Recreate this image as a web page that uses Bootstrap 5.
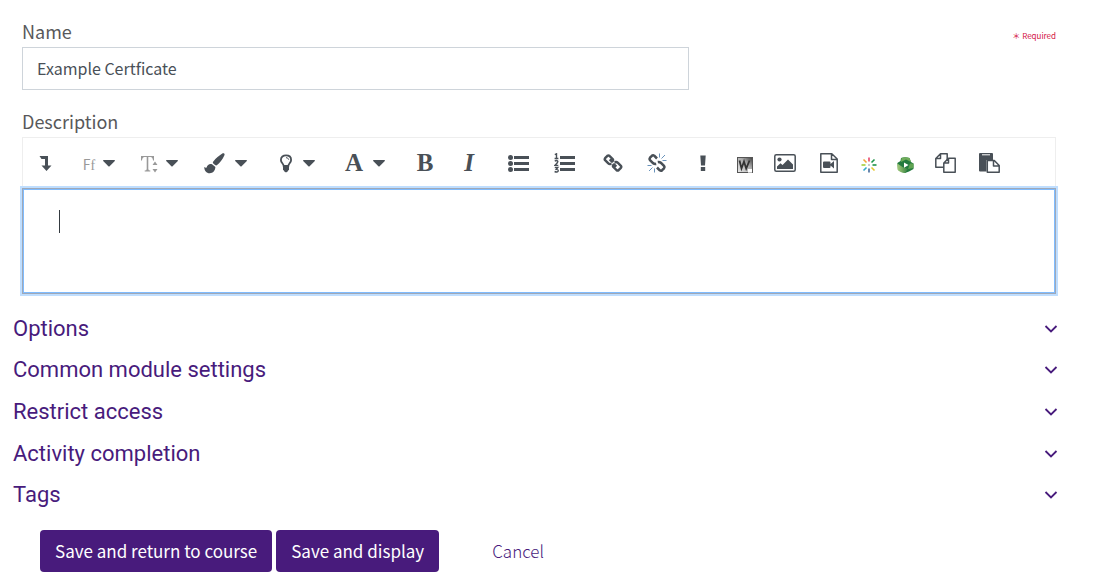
<!DOCTYPE html>
<html lang="en">
<head>
<meta charset="utf-8">
<meta name="viewport" content="width=device-width, initial-scale=1">
<title>Edit certificate</title>
<link href="https://cdn.jsdelivr.net/npm/bootstrap@5.3.0/dist/css/bootstrap.min.css" rel="stylesheet">
<style>
  :root { --brand: #481b7c; --ink: #495057; }
  body { font-family: "Noto Sans CJK SC", "Noto Sans", sans-serif; font-size: 17px; line-height: 24px; color: #555; background: #fff; }
  .fields { padding: 20px 40px 0 22px; }
  .field-label { font-size: 18px; line-height: 22px; display: block; margin: 0; color: #58585a; }
  .required-note { font-size: 8px; line-height: 12px; color: #d3123f; padding-top: 10px; }
  .name-box { font-size: 16px; line-height: 24px; height: 43px; max-width: 667px; margin-top: 5px; padding: 0 14px 2px; border: 1px solid #ced4da; border-radius: 0; color: var(--ink); }
  .desc-group { margin-top: 20px; }
  .toolbar { margin-top: 5px; min-height: 51px; gap: 4px; border: 1px solid #eee; border-bottom: 0; }
  .tool { width: 44px; height: 50px; padding: 0; border: 0; background: none; color: var(--ink); display: flex; align-items: center; justify-content: center; }
  .tool svg { display: block; flex: none; }
  .tool-list { width: 46px; }
  .tool-mark { width: 40px; }
  .tool-image { width: 36px; padding-top: 4px; }
  .tool-menu { width: 68px; gap: 10px; }
  .tool-menu-narrow { width: 56px; gap: 8px; }
  .glyph { font: bold 25px/30px "Liberation Serif", serif; }
  .glyph-font { font: 14px/20px "Noto Sans CJK SC", sans-serif; color: #999; padding-top: 4px; }
  .glyph-font span { font-family: "Liberation Serif", serif; }
  .editor { display: block; width: 100%; height: 106px; padding: 20px 35px; resize: none; border: 1px solid #a0a9b8; border-radius: 0; outline: 0; box-shadow: inset 0 0 0 1px #7fbcff, 0 0 0 2px #bfdeff; font-size: 17px; line-height: 24px; color: var(--ink); }
  .caret-line { position: absolute; left: 37px; top: 22px; width: 1px; height: 23px; background: #343a40; }
  .sections { padding: 0 38px 0 13px; margin-top: 14px; min-height: 208px; display: grid; grid-auto-rows: 1fr; }
  .section-link { font-family: Roboto, sans-serif; font-size: 22px; line-height: 28px; color: var(--brand); text-decoration: none; }
  .actions { padding: 14px 40px 12px; gap: 4px; }
  .save { height: 42px; padding: 0 15px; border: 0; border-radius: 4px; background: var(--brand); color: #fff; font-size: 17px; line-height: 24px; }
  .cancel { margin-left: 49px; color: var(--brand); font-weight: 300; font-size: 17px; text-decoration: none; }
</style>
</head>
<body>
<svg class="d-none" aria-hidden="true">
  <symbol id="down" viewBox="0 0 12 7"><path fill="currentColor" d="M.6 0h10.800q.8.1.4.9L6.600 6.300q-.6.5-1.200 0L.2.9Q-.2.1.6 0z"/></symbol>
  <symbol id="chev" viewBox="0 0 14 10"><path fill="none" stroke="currentColor" stroke-width="1.800" d="M1.500 2 7 7.500 12.500 2"/></symbol>
</svg>
<form onsubmit="return false">
  <div class="fields">
    <div class="d-flex justify-content-between">
      <label class="field-label" for="name">Name</label>
      <div class="required-note">＊ Required</div>
    </div>
    <input id="name" class="form-control name-box" type="text" value="Example Certficate">

    <div class="desc-group">
      <label class="field-label" for="desc">Description</label>
      <div class="toolbar d-flex flex-wrap" role="toolbar" aria-label="Editor">
        <button type="button" class="tool" aria-label="Show more buttons"><svg width="13" height="17" viewBox="0 0 13 17"><path fill="currentColor" d="M.5 1h8.500v9.500h3.500L7.500 16 2.500 10.500H6V4H2.500z"/></svg></button>

        <button type="button" class="tool tool-menu-narrow" aria-label="Font family"><span class="glyph-font">F<span>f</span></span><svg width="12" height="7"><use href="#down"/></svg></button>

        <button type="button" class="tool tool-menu-narrow" aria-label="Font size"><svg width="17" height="20" viewBox="0 0 17 20"><path fill="#999" d="M0 3h13v4.500h-1Q11.700 4 9.500 4H7.300v12q0 1.500 2 1.600v.9H3.700v-.9q2-.1 2-1.600V4H3.500Q1.300 4 1 7.500H0zM14 8.500l2.500 3.500h-5zM14 19.500 11.500 16h5z"/></svg><svg width="12" height="7"><use href="#down"/></svg></button>

        <button type="button" class="tool tool-menu" aria-label="Styles"><svg width="21" height="21" viewBox="0 0 21 21"><path fill="currentColor" d="M18.300.6c1.500-.9 2.900.4 2 2-1.900 3.900-4.500 7.700-7.200 9.500-.8.5-1.400.3-2.100-.2l-1.700-1.500c-.6-.7-.6-1.300 0-2C12 5.300 15 2.700 18.300.6zM8.400 11.400l3 2.600c-.2 3.600-2.400 6.200-5.600 6.200-3.600 0-5.300-2.400-5.600-6.300 1 .8 1.800 1.100 2.400.6.8-2.700 3-4.100 5.800-3.100z"/></svg><svg width="12" height="7"><use href="#down"/></svg></button>

        <div class="d-flex">
          <button type="button" class="tool tool-menu" aria-label="Background colour"><svg width="14" height="19" viewBox="0 0 14 19"><path fill="none" stroke="currentColor" stroke-width="1.800" d="M4.700 12C4.500 9.500 1.900 8.800 1.900 5.900 1.900 3 4.200 1.400 7 1.400s5.100 1.600 5.100 4.500c0 2.900-2.600 3.600-2.800 6.100z"/><path fill="none" stroke="currentColor" d="M7 3.700c1.500 0 2.500.8 2.700 2"/><path fill="currentColor" d="M4 12h6v3.500L8.500 17.500 7 18.500 5.500 17.500 4 15.500z"/></svg><svg width="12" height="7"><use href="#down"/></svg></button>
          <button type="button" class="tool tool-menu" aria-label="Font colour"><span class="glyph">A</span><svg width="12" height="7"><use href="#down"/></svg></button>
        </div>

        <div class="d-flex">
          <button type="button" class="tool" aria-label="Bold"><span class="glyph">B</span></button>
          <button type="button" class="tool" aria-label="Italic"><span class="glyph fst-italic">I</span></button>
        </div>

        <div class="d-flex">
          <button type="button" class="tool tool-list" aria-label="Unordered list"><svg width="21" height="17" viewBox="0 0 21 17"><g fill="currentColor"><circle cx="2.500" cy="2.500" r="2.500"/><circle cx="2.500" cy="8.500" r="2.500"/><circle cx="2.500" cy="14.500" r="2.500"/><path d="M6 1h15v3H6zM6 7h15v3H6zM6 13h15v3H6z"/></g></svg></button>
          <button type="button" class="tool tool-list" aria-label="Ordered list"><svg width="21" height="20" viewBox="0 0 21 20"><path fill="currentColor" d="M6 3h15v3H6zM6 9h15v3H6zM6 15h15v3H6z"/><path fill="none" stroke="currentColor" stroke-width="1.400" d="M.8 1.600 2.500.8V5.500M.6 5.500h3.800M.8 8.300q1.600-1.500 3 0Q4 9.500.8 12.400h3.500M.8 14.500h3L2.300 16.400q2 0 1.900 1.500-.8 1.900-3.600.6"/></svg></button>
        </div>

        <div class="d-flex">
          <button type="button" class="tool" aria-label="Link"><svg width="20" height="20" viewBox="0 0 20 20"><g fill="none" stroke="currentColor" stroke-width="2.400" stroke-linejoin="round"><path d="M8.500 10.700 6.800 11Q6 11 5.300 10.400L2.100 7.200Q1.300 6.200 2.100 5.200L4.400 2.800q1-.8 2 0L9.700 6q.8 1 0 2L9 8.600 6.700 6.300"/><path d="M11.500 9.300 13.200 9q.8 0 1.500.6l3.200 3.200q.8 1 0 2l-2.300 2.400q-1 .8-2 0L10.300 14q-.8-1 0-2l.7-.6 2.300 2.300"/></g></svg></button>
          <button type="button" class="tool" aria-label="Unlink"><svg width="20" height="20" viewBox="0 0 20 20"><g fill="none" stroke="currentColor"><path stroke-width="2.600" stroke-linejoin="round" d="M10 5.500 7.200 2.700q-1.200-.9-2.300.1L3 4.700Q2 6 3 7.200L6 10.200q1.500 1 3.200.7M10 14.500l2.800 2.800q1.200.9 2.300-.1L17 15.300q1-1.300 0-2.500L14 9.800q-1.500-1-3.200-.7"/><path stroke="#6993bb" d="M12.500.5v4M14.500 5.500 18 2M15.500 7.500h4M7.500 19.500v-4M5.500 14.500 2 18M4.500 12.500h-4"/></g></svg></button>
        </div>

        <button type="button" class="tool tool-mark" aria-label="Accessibility checker"><svg width="6" height="17" viewBox="0 0 6 17"><path fill="currentColor" d="M.3.500h5.400L5 10.500H1zM.8 12h4.400v4H.8z"/></svg></button>

        <div class="d-flex">
          <button type="button" class="tool tool-image" aria-label="Import Word file"><svg width="16" height="16" viewBox="0 0 16 16"><defs><linearGradient id="wg" x1="0" y1="1" x2="1" y2="0"><stop offset="0" stop-color="#eee"/><stop offset=".6" stop-color="#aaa"/><stop offset="1" stop-color="#333"/></linearGradient></defs><path fill="url(#wg)" d="M0 0h16v16H0z"/><path fill="none" stroke="#555" d="M.5 0v16M15.500 0v16M0 15.500h11M0 .5h16"/><path fill="none" stroke="#333" stroke-width="1.800" d="M2.500 3.500 4.500 11.500 7 4.500 9.200 11.500 12.500 3.500"/><path fill="#fff" d="M11 12h4v3h-4z"/></svg></button>
          <button type="button" class="tool" aria-label="Insert image"><svg width="22" height="18" viewBox="0 0 22 18"><rect x=".8" y=".8" width="20.400" height="16.400" rx="1.500" fill="none" stroke="currentColor" stroke-width="1.500"/><circle cx="5.500" cy="5.500" r="2.100" fill="currentColor"/><path fill="currentColor" d="M3 15v-2.500l3.500-3.300 2 1.900L14 5.500l5 5V15z"/></svg></button>
          <button type="button" class="tool" aria-label="Insert video"><svg width="18" height="20" viewBox="0 0 18 20"><path fill="none" stroke="currentColor" stroke-width="1.500" stroke-linejoin="round" d="M.8.8h11L17.200 6v13.200H.8zM11.500 1v5.500H17"/><path fill="currentColor" d="M4 8.500h5.500q1 0 1 1v1.500l3.500-3v7.500l-3.500-3v1.500q0 1-1 1H4q-1 0-1-1V9.500q0-1 1-1z"/></svg></button>
          <button type="button" class="tool tool-image" aria-label="Kaltura media"><svg width="16" height="16" viewBox="0 0 16 16"><g stroke-width="1.600"><path stroke="#e8486b" d="M8 .500v4"/><path stroke="#1d9448" d="m10.500 5.500 3-3"/><path stroke="#1d9448" d="M11.500 8h4"/><path stroke="#e5c82f" d="m10.500 10.500 3 3"/><path stroke="#426a9b" d="M8 11.500v4"/><path stroke="#35aaca" d="m5.500 10.500-3 3"/><path stroke="#a4cf39" d="M4.500 8h-4"/><path stroke="#f3a63b" d="m5.500 5.500-3-3"/></g><circle cx="8" cy="8" r=".8" fill="#888"/></svg></button>
          <button type="button" class="tool tool-image" aria-label="Panopto video"><svg width="17" height="16" viewBox="0 0 17 16"><defs><linearGradient id="pg"><stop offset="0" stop-color="#a5cb7c"/><stop offset="1" stop-color="#34813f"/></linearGradient></defs><path fill="#237a3e" d="M4 1Q8-.6 12.500 1L14 5l2.500 1.500V12L12 14.500 8 16 1 13 .3 6 3.500 4z"/><path fill="url(#pg)" d="M.3 6.500 5.500 10l5.500 2-3 4q-5-.2-7.500-3.500z"/><path fill="#6fac5a" d="M4.500 1Q8-.5 12.500 1L14 5 9 2.500 4 5z"/><path fill="#60a452" d="M13 6.500h3.500V11L11 12z"/><path fill="#fff" d="M7 5.500 11.500 8 7 10.800z"/></svg></button>
          <button type="button" class="tool" aria-label="Copy"><svg width="21" height="20" viewBox="0 0 21 20"><g fill="#fff" stroke="currentColor" stroke-width="1.500" stroke-linejoin="round"><path d="M5.500.8h6.700v13.400H.8V5.500zM5.500 1v4.500H1"/><path d="M13.500 5.300h6.700v13.900H8.800V10zM13.500 5.500V10H9"/></g></svg></button>
          <button type="button" class="tool" aria-label="Paste"><svg width="21" height="20" viewBox="0 0 21 20"><path fill="currentColor" d="M1 0h12q1 0 1 1v6H7.500v11.500H1q-1 0-1-1V1q0-1 1-1z"/><path fill="#fff" d="M3 1.300h8v1H3z"/><path fill="#fff" stroke="currentColor" stroke-width="1.500" stroke-linejoin="round" d="M8.300 7.500h7l4.900 5v6.700H8.300zM14.500 7.800v5.200H20"/></svg></button>
        </div>
      </div>
      <div class="position-relative">
        <textarea id="desc" class="editor"></textarea>
        <span class="caret-line"></span>
      </div>
    </div>
  </div>

  <div class="sections">
    <a href="#" class="section-link d-flex justify-content-between align-items-center">Options <svg width="14" height="10"><use href="#chev"/></svg></a>
    <a href="#" class="section-link d-flex justify-content-between align-items-center">Common module settings <svg width="14" height="10"><use href="#chev"/></svg></a>
    <a href="#" class="section-link d-flex justify-content-between align-items-center">Restrict access <svg width="14" height="10"><use href="#chev"/></svg></a>
    <a href="#" class="section-link d-flex justify-content-between align-items-center">Activity completion <svg width="14" height="10"><use href="#chev"/></svg></a>
    <a href="#" class="section-link d-flex justify-content-between align-items-center">Tags <svg width="14" height="10"><use href="#chev"/></svg></a>
  </div>

  <div class="actions d-flex flex-wrap align-items-center">
    <button type="submit" class="save">Save and return to course</button>
    <button type="submit" class="save">Save and display</button>
    <a href="#" class="cancel">Cancel</a>
  </div>
</form>
<script src="https://cdn.jsdelivr.net/npm/bootstrap@5.3.0/dist/js/bootstrap.bundle.min.js"></script>
</body>
</html>
